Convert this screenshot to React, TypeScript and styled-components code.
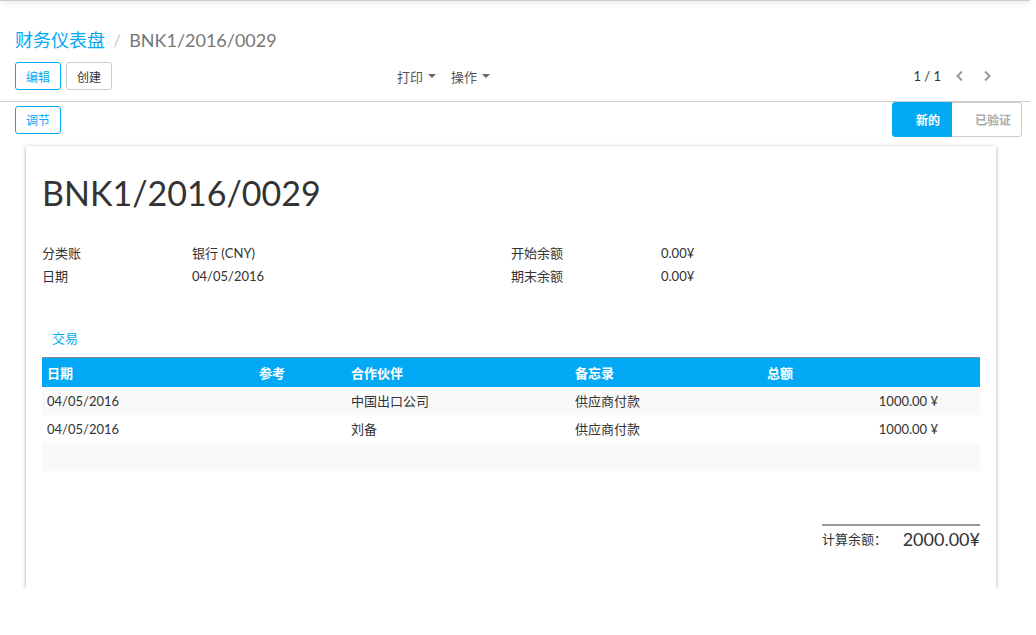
import styled, { createGlobalStyle } from 'styled-components'

const GlobalStyle = createGlobalStyle`
  html, body {
    margin: 0;
    padding: 0;
    background: #fff;
    font-family: 'Lato', 'Noto Sans CJK SC', sans-serif;
    font-size: 13px;
    color: #333;
  }
`

const BLUE = '#03a9f4'

const TopShadow = styled.div`
  height: 1px;
  margin-right: 6px;
  background: #ccc;
  box-shadow: 0 1px 5px rgba(0, 0, 0, 0.35);
`

const ControlPanel = styled.div`
  padding: 26px 15px 0;
  margin-right: 6px;
  border-bottom: 1px solid #ccc;
`

const Breadcrumb = styled.div`
  display: flex;
  align-items: center;
  gap: 8px;
  font-size: 18px;
  line-height: 26px;
  color: #777;
`

const Crumb = styled.a`
  color: ${BLUE};
  text-decoration: none;
`

const Slash = styled.span`
  color: #ccc;
`

const ButtonRow = styled.div`
  display: grid;
  grid-template-columns: 375px auto 1fr;
  align-items: center;
  padding: 9px 0 11px;
`

const Group = styled.div<{ $gap?: number }>`
  display: flex;
  align-items: center;
  gap: ${(p) => (p.$gap ?? 5)}px;
`

const PagerGroup = styled(Group)`
  justify-content: flex-end;
  gap: 0;
  margin-right: 15px;
`

const Button = styled.button<{ $primary?: boolean }>`
  height: 28px;
  padding: 0 10px;
  font-family: inherit;
  font-size: 12px;
  background: #fff;
  border-radius: 3px;
  border: 1px solid ${(p) => (p.$primary ? BLUE : '#ccc')};
  color: ${(p) => (p.$primary ? BLUE : '#333')};
  cursor: pointer;
`

const Dropdown = styled.span`
  display: inline-flex;
  align-items: center;
  gap: 5px;
  margin: 0 7px;
  font-size: 13px;
  color: #555;
  &::after {
    content: '';
    border-left: 4px solid transparent;
    border-right: 4px solid transparent;
    border-top: 4px solid #666;
  }
`

const Pager = styled.span`
  font-size: 13px;
  color: #333;
  margin-right: 5px;
`

const Chevron = styled.span`
  display: inline-flex;
  width: 27px;
  justify-content: center;
  color: #999;
`

const StatusBar = styled.div`
  display: flex;
  justify-content: space-between;
  align-items: center;
  padding: 0 14px 0 15px;
  height: 35px;
`

const StatusGroup = styled.div`
  display: flex;
  height: 35px;
`

const Status = styled.div<{ $active?: boolean }>`
  display: flex;
  align-items: center;
  justify-content: flex-end;
  box-sizing: border-box;
  font-size: 12px;
  font-weight: 700;
  padding: 0 ${(p) => (p.$active ? '11px' : '10px')};
  width: ${(p) => (p.$active ? '60px' : '70px')};
  background: ${(p) => (p.$active ? BLUE : '#fff')};
  color: ${(p) => (p.$active ? '#fff' : '#aaa')};
  border: 1px solid ${(p) => (p.$active ? BLUE : '#ccc')};
  border-left: ${(p) => (p.$active ? `1px solid ${BLUE}` : 'none')};
  border-radius: ${(p) => (p.$active ? '3px 0 0 3px' : '0 3px 3px 0')};
`

const Sheet = styled.div`
  margin: 9px 40px 0 26px;
  box-sizing: border-box;
  background: #fff;
  padding: 26px 16px 38px;
  box-shadow: 0 1px 4px rgba(0, 0, 0, 0.35);
  display: flex;
  flex-direction: column;
`

const Title = styled.h1`
  margin: 0 0 30px;
  font-size: 34px;
  font-weight: 400;
  line-height: 42px;
  color: #333;
`

const FieldGrid = styled.div`
  display: grid;
  grid-template-columns: 150px 319px 150px 1fr;
  row-gap: 4px;
  line-height: 19px;
`

const Label = styled.div`
  color: #333;
`

const Value = styled.div`
  color: #333;
`

const Tabs = styled.div`
  margin-top: 40px;
  padding: 0 10px;
  line-height: 24px;
`

const Tab = styled.span`
  color: ${BLUE};
  font-size: 13px;
`

const Table = styled.table`
  width: 100%;
  margin-top: 7px;
  border-collapse: collapse;
  table-layout: fixed;
  font-size: 13px;
`

const Th = styled.th<{ $w?: string }>`
  box-sizing: border-box;
  background: ${BLUE};
  color: #fff;
  font-weight: 700;
  text-align: left;
  padding: 0 5px;
  height: 29px;
  width: ${(p) => p.$w || 'auto'};
  border-top: 1px solid #888;
`

const Tr = styled.tr`
  &:nth-child(odd) {
    background: #f9f9f9;
  }
`

const Td = styled.td<{ $right?: boolean }>`
  height: 28px;
  padding: 0 5px;
  text-align: ${(p) => (p.$right ? 'right' : 'left')};
`

const AmountCell = styled(Td)`
  padding-right: 42px;
`

const TotalBox = styled.div`
  align-self: flex-end;
  width: 158px;
  margin-top: 53px;
  border-top: 2px solid #999;
  display: flex;
  justify-content: space-between;
  align-items: center;
  padding-top: 2px;
`

const TotalLabel = styled.span`
  font-size: 13px;
`

const TotalValue = styled.span`
  font-size: 18px;
  color: #333;
`

const lines = [
  { date: '04/05/2016', ref: '', partner: '中国出口公司', memo: '供应商付款', amount: '1000.00 ¥' },
  { date: '04/05/2016', ref: '', partner: '刘备', memo: '供应商付款', amount: '1000.00 ¥' },
]

export default function App() {
  return (
    <>
      <GlobalStyle />
      <TopShadow />
      <ControlPanel>
        <Breadcrumb>
          <Crumb>财务仪表盘</Crumb>
          <Slash>/</Slash>
          <span>BNK1/2016/0029</span>
        </Breadcrumb>
        <ButtonRow>
          <Group>
            <Button $primary>编辑</Button>
            <Button>创建</Button>
          </Group>
          <Group $gap={1}>
            <Dropdown>打印</Dropdown>
            <Dropdown>操作</Dropdown>
          </Group>
          <PagerGroup>
            <Pager>1 / 1</Pager>
            <Chevron>
              <svg width="10" height="12" viewBox="0 0 10 12">
                <path d="M7 1.5 L2.5 6 L7 10.5" fill="none" stroke="#999" strokeWidth="2" />
              </svg>
            </Chevron>
            <Chevron>
              <svg width="10" height="12" viewBox="0 0 10 12">
                <path d="M3 1.5 L7.5 6 L3 10.5" fill="none" stroke="#999" strokeWidth="2" />
              </svg>
            </Chevron>
          </PagerGroup>
        </ButtonRow>
      </ControlPanel>
      <StatusBar>
        <Button $primary>调节</Button>
        <StatusGroup>
          <Status $active>新的</Status>
          <Status>已验证</Status>
        </StatusGroup>
      </StatusBar>
      <Sheet>
        <Title>BNK1/2016/0029</Title>
        <FieldGrid>
          <Label>分类账</Label>
          <Value>银行 (CNY)</Value>
          <Label>开始余额</Label>
          <Value>0.00¥</Value>
          <Label>日期</Label>
          <Value>04/05/2016</Value>
          <Label>期末余额</Label>
          <Value>0.00¥</Value>
        </FieldGrid>
        <Tabs>
          <Tab>交易</Tab>
        </Tabs>
        <Table>
          <thead>
            <tr>
              <Th $w="212px">日期</Th>
              <Th $w="92px">参考</Th>
              <Th $w="224px">合作伙伴</Th>
              <Th $w="192px">备忘录</Th>
              <Th>总额</Th>
            </tr>
          </thead>
          <tbody>
            {lines.map((l, i) => (
              <Tr key={i}>
                <Td>{l.date}</Td>
                <Td>{l.ref}</Td>
                <Td>{l.partner}</Td>
                <Td>{l.memo}</Td>
                <AmountCell $right>{l.amount}</AmountCell>
              </Tr>
            ))}
            <Tr>
              <Td colSpan={5}></Td>
            </Tr>
          </tbody>
        </Table>
        <TotalBox>
          <TotalLabel>计算余额：</TotalLabel>
          <TotalValue>2000.00¥</TotalValue>
        </TotalBox>
      </Sheet>
    </>
  )
}
